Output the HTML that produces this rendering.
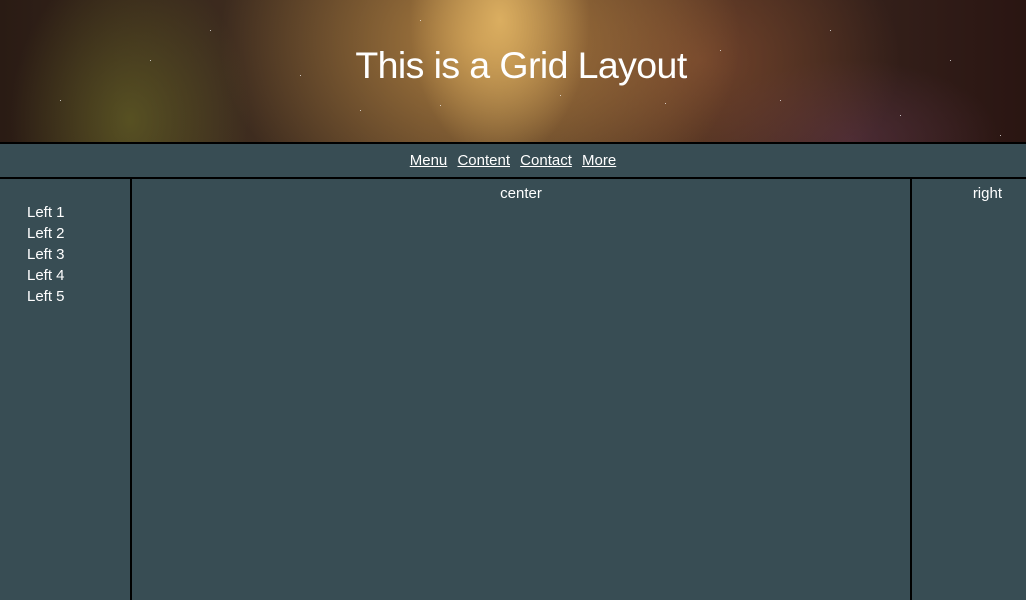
<!DOCTYPE html>
<html><head><meta charset="utf-8"><style>
*{margin:0;padding:0;box-sizing:border-box}
html,body{width:1026px;height:600px;overflow:hidden;background:#384d54;font-family:"Segoe UI","Liberation Sans",sans-serif;color:#fff}
.hdr{position:absolute;left:0;top:0;width:1026px;height:142px;overflow:hidden;
background:
radial-gradient(ellipse 90px 140px at 500px 20px,rgba(225,180,100,.9),rgba(225,180,100,0) 100%),
radial-gradient(ellipse 260px 200px at 480px 40px,rgba(190,140,70,.85),rgba(190,140,70,0) 100%),
radial-gradient(ellipse 120px 160px at 130px 120px,rgba(110,110,40,.6),rgba(110,110,40,0) 100%),
radial-gradient(ellipse 200px 150px at 700px 60px,rgba(140,80,50,.6),rgba(140,80,50,0) 100%),
radial-gradient(ellipse 150px 80px at 850px 140px,rgba(90,50,70,.6),rgba(90,50,70,0) 100%),
linear-gradient(90deg,#2a1b14 0%,#3b2a1e 20%,#4a3322 45%,#4a3020 65%,#34201a 85%,#2a1512 100%)}
.hdr h1{position:absolute;left:0;right:0;top:44px;text-align:center;font-weight:300;font-size:37.5px;color:#fff;letter-spacing:-.6px;padding-left:16px}
.star{position:absolute;width:1px;height:1px;background:rgba(255,255,255,.7)}
.b1{position:absolute;left:0;top:142px;width:1026px;height:2px;background:#000}
.nav{position:absolute;left:0;top:144px;width:1026px;height:33px;text-align:center;font-size:15px;line-height:33px}
.nav a{color:#fff;text-decoration:underline;margin:0 3px}
.b2{position:absolute;left:0;top:177px;width:1026px;height:2px;background:#000}
.v1{position:absolute;left:130px;top:179px;width:2px;height:421px;background:#000}
.v2{position:absolute;left:910px;top:179px;width:2px;height:421px;background:#000}
.left{position:absolute;left:27px;top:202px;font-size:15px;line-height:21px}
.center{position:absolute;left:132px;width:778px;top:185px;text-align:center;font-size:15px}
.right{position:absolute;left:912px;width:114px;top:185px;text-align:right;padding-right:24px;font-size:15px}
</style></head><body>
<div class="hdr">
<div class="star" style="left:210px;top:30px"></div><div class="star" style="left:300px;top:75px"></div>
<div class="star" style="left:360px;top:110px"></div><div class="star" style="left:420px;top:20px"></div>
<div class="star" style="left:440px;top:105px"></div><div class="star" style="left:560px;top:95px"></div>
<div class="star" style="left:640px;top:70px"></div><div class="star" style="left:665px;top:103px"></div>
<div class="star" style="left:720px;top:50px"></div><div class="star" style="left:780px;top:100px"></div>
<div class="star" style="left:830px;top:30px"></div><div class="star" style="left:900px;top:115px"></div>
<div class="star" style="left:950px;top:60px"></div><div class="star" style="left:1000px;top:135px"></div>
<div class="star" style="left:60px;top:100px"></div><div class="star" style="left:150px;top:60px"></div>
<h1>This is a Grid Layout</h1></div>
<div class="b1"></div>
<div class="nav"><a>Menu</a> <a>Content</a> <a>Contact</a> <a>More</a></div>
<div class="b2"></div>
<div class="v1"></div><div class="v2"></div>
<div class="left">Left 1<br>Left 2<br>Left 3<br>Left 4<br>Left 5</div>
<div class="center">center</div>
<div class="right">right</div>
</body></html>
